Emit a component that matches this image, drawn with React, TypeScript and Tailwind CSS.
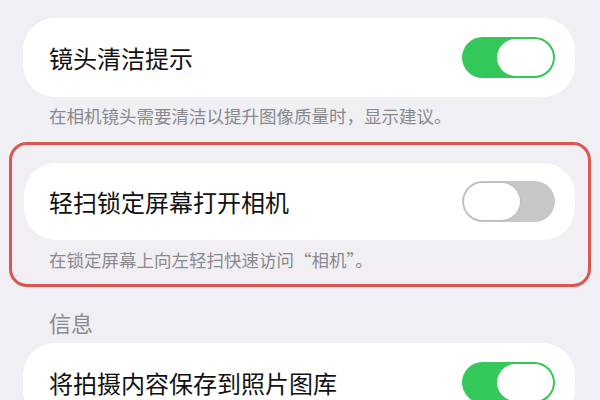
const FONT = { fontFamily: '"Noto Sans CJK SC", "Noto Sans", sans-serif' };

function Toggle({ on }: { on: boolean }) {
  return (
    <div
      className={`flex h-[41px] w-[93px] shrink-0 items-center rounded-full p-[2px] ${
        on ? "justify-end bg-[#34c759]" : "justify-start bg-[#c7c7c9]"
      }`}
    >
      <div
        className={`h-[37px] w-[56px] rounded-full bg-white ${
          on ? "" : "ring-1 ring-[#bdbdc0]"
        }`}
      />
    </div>
  );
}

function Row({ title, on }: { title: string; on: boolean }) {
  return (
    <div className="flex h-[79px] items-center justify-between rounded-[32px] bg-white pl-[26px] pr-[20px]">
      <span className="text-[24px] leading-none text-[#111]">{title}</span>
      <Toggle on={on} />
    </div>
  );
}

export default function App() {
  return (
    <div style={FONT} className="h-[400px] w-[600px] overflow-hidden bg-[#efeff4] px-[9px] pt-[18px]">
      {/* 镜头清洁提示 */}
      <div className="pl-[14px] pr-[16px]">
        <Row title="镜头清洁提示" on />
        <p className="mt-[7px] pl-[26px] text-[17.5px] leading-[24px] text-[#8a8a8e]">
          在相机镜头需要清洁以提升图像质量时，显示建议。
        </p>
      </div>

      {/* highlighted */}
      <div className="mt-[14px] rounded-[18px] border-[3px] border-[#d9574e] bg-[#f1eff4] pb-[12px] pl-[12px] pr-[13px] pt-[18px]">
        <div className="h-[77px]">
          <div className="flex h-[77px] items-center justify-between rounded-[32px] bg-white pl-[25px] pr-[20px]">
            <span className="text-[24px] leading-none text-[#111]">轻扫锁定屏幕打开相机</span>
            <Toggle on={false} />
          </div>
        </div>
        <p className="mt-[8px] pl-[25px] text-[17.5px] leading-[24px] text-[#8a8a8e]">
          在锁定屏幕上向左轻扫快速访问“相机”。
        </p>
      </div>

      {/* 信息 */}
      <div className="pl-[14px] pr-[16px]">
        <p className="mt-[20px] pl-[26px] text-[22px] leading-[30px] text-[#8a8a8e]">信息</p>
        <div className="mt-[6px]">
          <Row title="将拍摄内容保存到照片图库" on />
        </div>
      </div>
    </div>
  );
}
